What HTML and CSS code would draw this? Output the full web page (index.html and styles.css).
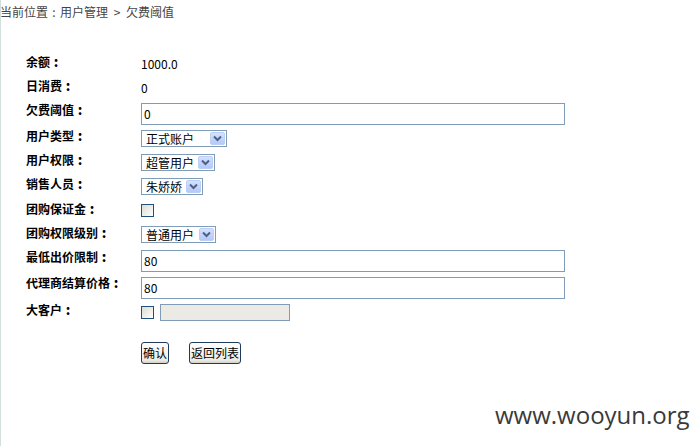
FILE: index.html
```html
<!DOCTYPE html>
<html lang="zh">
<head>
<meta charset="utf-8">
<title>欠费阈值</title>
<link rel="stylesheet" href="styles.css">
</head>
<body>
<div class="page">
  <div class="crumb">当前位置<span class="c">:</span>用户管理 &gt; 欠费阈值</div>
  <div class="form">
    <div class="lbl">余额<span class="c">:</span></div>
    <div class="val off2">1000.0</div>

    <div class="lbl">日消费<span class="c">:</span></div>
    <div class="val off2">0</div>

    <div class="lbl">欠费阈值<span class="c">:</span></div>
    <div class="val"><div class="txt">0</div></div>

    <div class="lbl">用户类型<span class="c">:</span></div>
    <div class="val off1"><div class="sel w86"><span class="opt">正式账户</span><span class="arr"><svg width="9" height="7" viewBox="0 0 9 7"><path d="M1 1.5 L4.5 5 L8 1.5" fill="none" stroke="#4d6185" stroke-width="2"/></svg></span></div></div>

    <div class="lbl">用户权限<span class="c">:</span></div>
    <div class="val off1"><div class="sel w74"><span class="opt">超管用户</span><span class="arr"><svg width="9" height="7" viewBox="0 0 9 7"><path d="M1 1.5 L4.5 5 L8 1.5" fill="none" stroke="#4d6185" stroke-width="2"/></svg></span></div></div>

    <div class="lbl">销售人员<span class="c">:</span></div>
    <div class="val off1"><div class="sel w62"><span class="opt">朱娇娇</span><span class="arr"><svg width="9" height="7" viewBox="0 0 9 7"><path d="M1 1.5 L4.5 5 L8 1.5" fill="none" stroke="#4d6185" stroke-width="2"/></svg></span></div></div>

    <div class="lbl">团购保证金<span class="c">:</span></div>
    <div class="val off2"><span class="chk"></span></div>

    <div class="lbl">团购权限级别<span class="c">:</span></div>
    <div class="val"><div class="sel w75"><span class="opt">普通用户</span><span class="arr"><svg width="9" height="7" viewBox="0 0 9 7"><path d="M1 1.5 L4.5 5 L8 1.5" fill="none" stroke="#4d6185" stroke-width="2"/></svg></span></div></div>

    <div class="lbl">最低出价限制<span class="c">:</span></div>
    <div class="val"><div class="txt">80</div></div>

    <div class="lbl">代理商结算价格<span class="c">:</span></div>
    <div class="val off1"><div class="txt">80</div></div>

    <div class="lbl">大客户<span class="c">:</span></div>
    <div class="val off1 pair"><span class="chk"></span><span class="dis"></span></div>

    <div class="lbl"></div>
    <div class="val btns"><span class="btn">确认</span><span class="btn">返回列表</span></div>
  </div>
  <div class="mark">www.wooyun.org</div>
</div>
</body>
</html>
```
FILE: styles.css
```css
html, body {
  margin: 0;
  padding: 0;
  background: #fff;
}
body {
  font-family: "Noto Sans CJK SC", "Liberation Sans", sans-serif;
  font-size: 12px;
  color: #000;
}
.page {
  position: relative;
  width: 700px;
  height: 446px;
  border-left: 1px solid #d3dfdd;
  box-sizing: border-box;
  overflow: hidden;
}
.c {
  display: inline-block;
  width: 12px;
  text-align: center;
}
.lbl .c {
  font-weight: 900;
  font-size: 13px;
}
.crumb {
  color: #444;
  font-size: 12px;
  line-height: 14px;
  padding-top: 5px;
  margin-left: -1px;
  word-spacing: 3px;
}
.form {
  display: grid;
  grid-template-columns: 115px 560px;
  grid-template-rows: 24px 24px 26px 24px 24px 25px 24px 24px 26px 27px 39px 22px;
  align-items: start;
  margin-top: 36px;
  margin-left: 25px;
}
.lbl {
  font-weight: bold;
  line-height: 14px;
  white-space: nowrap;
}
.val {
  line-height: 14px;
  display: flex;
  align-items: flex-start;
}
.off1 { margin-top: 1px; }
.off2 { margin-top: 2px; }
.txt {
  width: 424px;
  height: 22px;
  box-sizing: border-box;
  border: 1px solid #7f9db9;
  padding-left: 2px;
  line-height: 20px;
  background: #fff;
}
.sel {
  height: 17px;
  box-sizing: border-box;
  border: 1px solid #7f9db9;
  display: flex;
  align-items: center;
  justify-content: space-between;
  padding: 0 1px 0 4px;
  background: #fff;
  line-height: 15px;
}
.w86 { width: 86px; }
.w74 { width: 74px; }
.w62 { width: 62px; }
.w75 { width: 75px; }
.arr {
  width: 15px;
  height: 13px;
  box-sizing: border-box;
  border: 1px solid #bccff6;
  border-radius: 2px;
  background: linear-gradient(#d4e0fd, #b5c9f7);
  display: flex;
  align-items: center;
  justify-content: center;
}
.chk {
  width: 13px;
  height: 13px;
  box-sizing: border-box;
  border: 1px solid #1c5180;
  background: linear-gradient(135deg, #dcdcd4, #fdfdfc);
  display: block;
}
.pair {
  gap: 6px;
  align-items: flex-start;
}
.pair .chk { margin-top: 2px; }
.dis {
  width: 130px;
  height: 17px;
  box-sizing: border-box;
  border: 1px solid #7f9db9;
  background: #ebeae4;
  display: block;
}
.btns { gap: 20px; }
.btn {
  height: 22px;
  box-sizing: border-box;
  border: 1px solid #1f3a5a;
  border-radius: 3px;
  background: linear-gradient(#ffffff, #ecebe6 85%, #d6d0c5);
  padding: 0 1px;
  line-height: 20px;
  display: block;
}
.mark {
  position: absolute;
  left: 494px;
  top: 399px;
  font-family: "Open Sans", "DejaVu Sans", sans-serif;
  font-size: 24px;
  line-height: 32px;
  color: #3a3a3a;
}
```
